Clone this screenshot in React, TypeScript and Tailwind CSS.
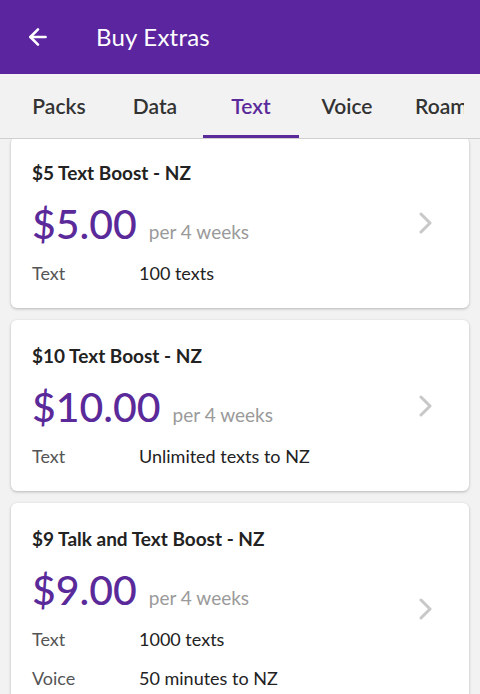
import { ArrowLeft } from 'lucide-react'

type Pack = {
  title: string
  price: string
  rows: { label: string; value: string }[]
}

const packs: Pack[] = [
  { title: '$5 Text Boost - NZ', price: '$5.00', rows: [{ label: 'Text', value: '100 texts' }] },
  { title: '$10 Text Boost - NZ', price: '$10.00', rows: [{ label: 'Text', value: 'Unlimited texts to NZ' }] },
  {
    title: '$9 Talk and Text Boost - NZ',
    price: '$9.00',
    rows: [
      { label: 'Text', value: '1000 texts' },
      { label: 'Voice', value: '50 minutes to NZ' },
    ],
  },
]

const tabs = ['Packs', 'Data', 'Text', 'Voice', 'Roaming']

export default function App() {
  return (
    <div className="h-[694px] overflow-hidden bg-[#f2f2f2] font-['Lato',sans-serif]">
      {/* App bar */}
      <div className="relative z-20 flex h-[74px] items-center bg-[#5b259f] text-white">
        <ArrowLeft className="ml-[25px] h-[26px] w-[26px]" strokeWidth={2.4} />
        <h1 className="ml-[45px] text-[24px] tracking-[0.2px]">Buy Extras</h1>
      </div>

      {/* Tabs */}
      <div className="relative z-10 h-[65px] border-b border-[#cfcfcf] bg-[#f2f2f2]">
        <div className="ml-[11px] mr-[16px] flex h-full overflow-hidden">
          {tabs.map((t) => (
            <div
              key={t}
              className={`relative flex w-[96px] shrink-0 items-center justify-center text-[21px] font-semibold ${
                t === 'Text' ? 'text-[#5b2a9a]' : 'text-[#333333]'
              } ${t === 'Roaming' ? 'justify-start pl-[20px]' : ''}`}
            >
              {t}
              {t === 'Text' && <div className="absolute bottom-0 left-0 right-0 h-[3px] bg-[#5b2a9a]" />}
            </div>
          ))}
        </div>
      </div>

      {/* Pack list */}
      <div className="-mt-[2px] flex flex-col gap-[12px] px-[11px]">
        {packs.map((p) => (
          <div
            key={p.title}
            className="flex items-center rounded-[6px] bg-white pb-[23px] pl-[21px] pr-[36px] pt-[24px] shadow-[0_1px_3px_rgba(0,0,0,0.25)]"
          >
            <div className="flex-1">
              <div className="text-[19px] font-bold leading-[24px] text-[#222222]">{p.title}</div>
              <div className="mt-[14px] flex items-baseline">
                <span className="text-[41px] font-medium leading-[50px] text-[#5b2a9a]">{p.price}</span>
                <span className="ml-[12px] text-[19px] text-[#9a9a9a]">per 4 weeks</span>
              </div>
              <div className="mt-[12px] flex flex-col gap-[15px]">
                {p.rows.map((r) => (
                  <div key={r.label} className="flex text-[18px] leading-[24px]">
                    <span className="w-[107px] text-[#555555]">{r.label}</span>
                    <span className="text-[#222222]">{r.value}</span>
                  </div>
                ))}
              </div>
            </div>
            <svg width="14" height="22" viewBox="0 0 14 22" fill="none">
              <polyline points="2,2 11,11 2,20" stroke="#c8c8c8" strokeWidth="3" strokeLinecap="round" strokeLinejoin="round" />
            </svg>
          </div>
        ))}
      </div>
    </div>
  )
}
